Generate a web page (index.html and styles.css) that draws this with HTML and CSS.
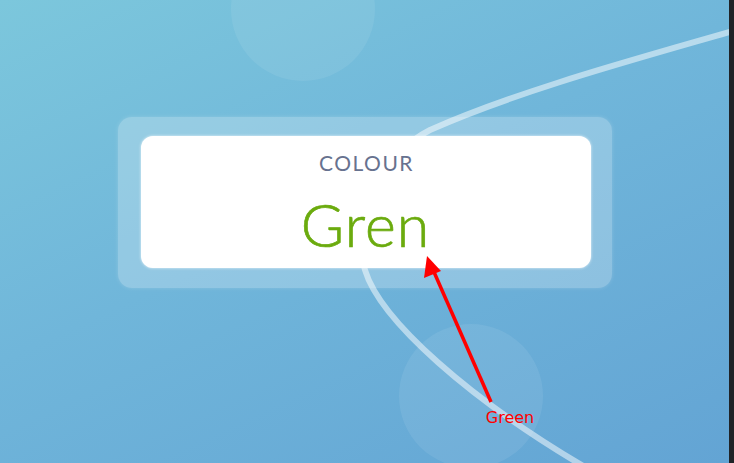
FILE: index.html
```html
<!DOCTYPE html>
<html lang="en">
<head>
<meta charset="utf-8">
<title>Colour</title>
<link rel="stylesheet" href="styles.css">
</head>
<body>
<div class="screen">
  <main class="stage">
    <div class="bubble bubble-top"></div>
    <div class="bubble bubble-bottom"></div>
    <svg class="arc" width="729" height="463" viewBox="0 0 729 463" aria-hidden="true">
      <path d="M 740 29 C 640 58, 520 90, 430 130 C 380 155, 350 220, 365 270 C 380 320, 470 400, 590 470" />
    </svg>
    <section class="panel">
      <div class="card">
        <div class="label">COLOUR</div>
        <div class="value">Gren</div>
      </div>
    </section>
    <svg class="annotation" width="729" height="463" viewBox="0 0 729 463" aria-hidden="true">
      <line x1="491" y1="402" x2="434" y2="272" />
      <polygon points="427,256 424,278 441,271" />
      <text x="510" y="423">Green</text>
    </svg>
  </main>
  <div class="edge"></div>
</div>
</body>
</html>
```
FILE: styles.css
```css
html, body {
  margin: 0;
  padding: 0;
  width: 734px;
  height: 463px;
  overflow: hidden;
}

.screen {
  display: flex;
  width: 734px;
  height: 463px;
}

.stage {
  position: relative;
  flex: 1;
  overflow: hidden;
  background: linear-gradient(155deg, #7cc7dc 0%, #70b6da 45%, #63a4d4 100%);
  display: flex;
  flex-direction: column;
  align-items: center;
  padding-top: 117px;
  box-sizing: border-box;
}

.edge {
  width: 5px;
  background: #1f2327;
}

.bubble {
  position: absolute;
  border-radius: 50%;
  background: rgba(255, 255, 255, 0.08);
}

.bubble-top {
  width: 144px;
  height: 144px;
  left: 231px;
  top: -63px;
}

.bubble-bottom {
  width: 144px;
  height: 144px;
  left: 399px;
  top: 324px;
}

.arc {
  position: absolute;
  left: 0;
  top: 0;
}

.arc path {
  fill: none;
  stroke: rgba(255, 255, 255, 0.5);
  stroke-width: 6;
}

.panel {
  position: relative;
  width: 494px;
  height: 171px;
  box-sizing: border-box;
  padding: 19px 21px 20px 23px;
  border-radius: 14px;
  background: rgba(255, 255, 255, 0.24);
  box-shadow: 0 0 4px rgba(255, 255, 255, 0.18);
}

.card {
  height: 132px;
  border-radius: 12px;
  background: #ffffff;
  box-shadow: 0 0 3px rgba(255, 255, 255, 0.8);
  display: flex;
  flex-direction: column;
  align-items: center;
  font-family: Lato, "Open Sans", sans-serif;
}

.label {
  margin-top: 14px;
  padding-left: 2px;
  font-size: 21px;
  line-height: 25px;
  letter-spacing: 1.5px;
  color: #67728f;
}

.value {
  margin-top: 17px;
  font-size: 59px;
  line-height: 66px;
  font-weight: 300;
  letter-spacing: 1px;
  -webkit-text-stroke: 0.7px #6bab0e;
  color: #6bab0e;
}

.annotation {
  position: absolute;
  left: 0;
  top: 0;
}

.annotation line {
  stroke: #ff0000;
  stroke-width: 3.5;
}

.annotation polygon {
  fill: #ff0000;
}

.annotation text {
  fill: #ff0000;
  font-family: "DejaVu Sans", sans-serif;
  font-size: 16px;
  text-anchor: middle;
}
```
